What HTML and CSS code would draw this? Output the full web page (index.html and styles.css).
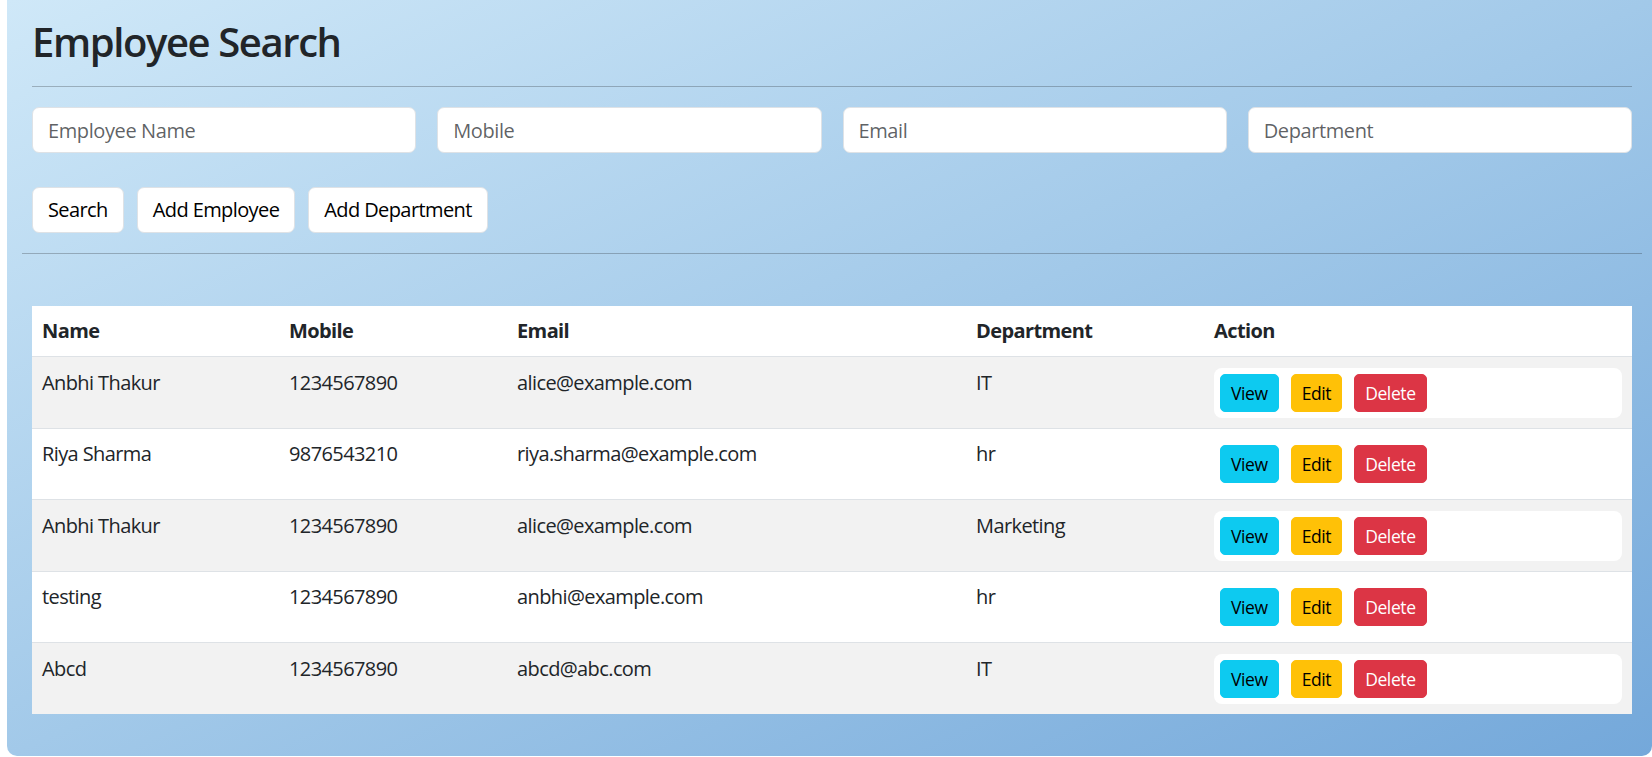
FILE: index.html
```html
<!DOCTYPE html>
<html lang="en">
<head>
<meta charset="utf-8">
<title>Employee Search</title>
<link rel="stylesheet" href="styles.css">
</head>
<body>
<div class="page">
  <div class="search">
    <h1 class="title">Employee Search</h1>
    <hr class="rule">
    <div class="fields">
      <input class="field" type="text" placeholder="Employee Name">
      <input class="field" type="text" placeholder="Mobile">
      <input class="field" type="text" placeholder="Email">
      <input class="field" type="text" placeholder="Department">
    </div>
    <div class="actions">
      <button class="btn">Search</button>
      <button class="btn">Add Employee</button>
      <button class="btn">Add Department</button>
    </div>
  </div>
  <hr class="rule wide">
  <div class="table-wrap">
    <table class="grid">
      <colgroup>
        <col class="c-name"><col class="c-mobile"><col class="c-email"><col class="c-dept"><col class="c-action">
      </colgroup>
      <thead>
        <tr><th>Name</th><th>Mobile</th><th>Email</th><th>Department</th><th>Action</th></tr>
      </thead>
      <tbody>
        <tr class="odd"><td>Anbhi Thakur</td><td>1234567890</td><td>alice@example.com</td><td>IT</td>
          <td><div class="ops"><button class="sb view">View</button><button class="sb edit">Edit</button><button class="sb del">Delete</button></div></td></tr>
        <tr><td>Riya Sharma</td><td>9876543210</td><td>riya.sharma@example.com</td><td>hr</td>
          <td><div class="ops"><button class="sb view">View</button><button class="sb edit">Edit</button><button class="sb del">Delete</button></div></td></tr>
        <tr class="odd"><td>Anbhi Thakur</td><td>1234567890</td><td>alice@example.com</td><td>Marketing</td>
          <td><div class="ops"><button class="sb view">View</button><button class="sb edit">Edit</button><button class="sb del">Delete</button></div></td></tr>
        <tr><td>testing</td><td>1234567890</td><td>anbhi@example.com</td><td>hr</td>
          <td><div class="ops"><button class="sb view">View</button><button class="sb edit">Edit</button><button class="sb del">Delete</button></div></td></tr>
        <tr class="odd"><td>Abcd</td><td>1234567890</td><td>abcd@abc.com</td><td>IT</td>
          <td><div class="ops"><button class="sb view">View</button><button class="sb edit">Edit</button><button class="sb del">Delete</button></div></td></tr>
      </tbody>
    </table>
  </div>
</div>
</body>
</html>
```

FILE: styles.css
```css
* { box-sizing: border-box; }
html, body { margin: 0; padding: 0; }
body {
  padding-left: 7px;
  font-family: "Open Sans", "Noto Sans", sans-serif;
  font-size: 20px;
  line-height: 1.5;
  color: #212529;
  background: #ffffff;
  letter-spacing: -0.6px;
}
.page {
  height: 756px;
  padding: 18px 10px 0 15px;
  border-radius: 0 0 10px 10px;
  background: linear-gradient(to bottom right, #cfe8f8 0%, #a2c9e9 50%, #74a8da 100%);
}
.search { padding: 0 10px; }
.title {
  margin: 0;
  font-size: 40px;
  line-height: 48px;
  font-weight: 600;
  letter-spacing: -1.4px;
}
.rule {
  margin: 20px 0;
  border: 0;
  border-top: 1px solid rgba(33, 37, 41, 0.28);
  height: 0;
}
.fields {
  display: grid;
  grid-template-columns: repeat(4, 1fr);
  gap: 21px;
}
.field {
  height: 46px;
  padding: 7px 15px;
  font: inherit;
  letter-spacing: -0.4px;
  color: #212529;
  background: #fff;
  border: 1px solid #dee2e6;
  border-radius: 7px;
  outline: none;
}
.field::placeholder { color: rgba(33, 37, 41, 0.72); }
.actions {
  display: flex;
  gap: 13px;
  margin-top: 34px;
}
.btn {
  height: 46px;
  padding: 7px 15px;
  font: inherit;
  letter-spacing: -0.6px;
  color: #000;
  background: #fff;
  border: 1px solid #dee2e6;
  border-radius: 7px;
}
.wide { margin: 20px 0 0; }
.table-wrap { padding: 52px 10px 0; }
.grid {
  width: 100%;
  table-layout: fixed;
  border-collapse: collapse;
  background: #fff;
}
.c-name { width: 247px; }
.c-mobile { width: 228px; }
.c-email { width: 459px; }
.c-dept { width: 238px; }
.c-action { width: 428px; }
.grid th, .grid td {
  padding: 10px;
  text-align: left;
  vertical-align: top;
  border-bottom: 1px solid #dee2e6;
}
.grid td { padding: 10.5px 10px 10px; }
.grid th { font-weight: 700; }
.grid tbody tr:last-child td { border-bottom: 0; }
.grid tr.odd td { background: #f2f2f2; }
.ops {
  display: flex;
  gap: 12px;
  padding: 6px;
  background: #fff;
  border-radius: 8px;
}
.sb {
  height: 38px;
  padding: 5px 10px;
  font-family: inherit;
  font-size: 17.5px;
  line-height: 26px;
  letter-spacing: -0.4px;
  border: 1px solid transparent;
  border-radius: 5px;
}
.view { background: #0dcaf0; border-color: #0dcaf0; color: #000; }
.edit { background: #ffc107; border-color: #ffc107; color: #000; }
.del { background: #dc3545; border-color: #dc3545; color: #fff; }
```
